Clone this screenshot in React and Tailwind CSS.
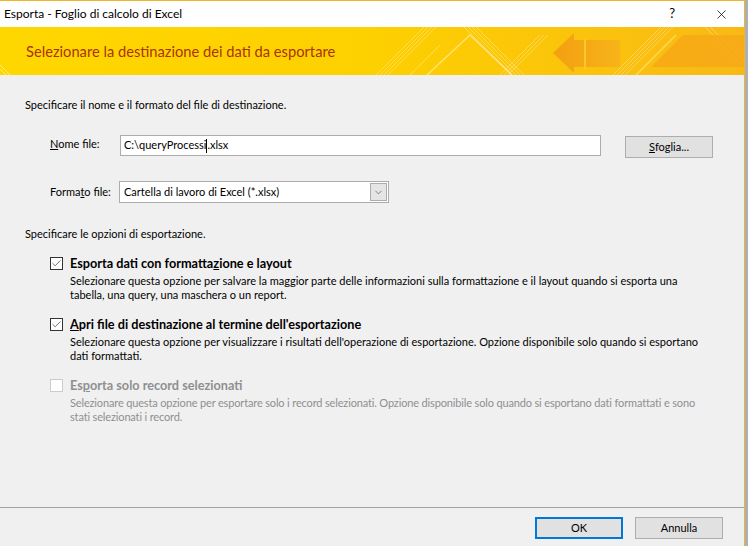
import { Check, ChevronDown, X } from 'lucide-react';

const font = { fontFamily: '"Segoe UI", Lato, "Noto Sans", sans-serif' };

// Decorative banner art: diagonal light stripes and an orange arrow
const BannerArt = () => (
  <svg className="absolute inset-0" width="744" height="48" viewBox="0 0 744 48">
    <defs>
      <linearGradient id="bg" x1="0" y1="0" x2="1" y2="0">
        <stop offset="0" stopColor="#ffd700" />
        <stop offset="0.5" stopColor="#fdd000" />
        <stop offset="1" stopColor="#f9b915" />
      </linearGradient>
      <linearGradient id="arrow" x1="0" y1="0" x2="1" y2="0">
        <stop offset="0" stopColor="#f29b12" />
        <stop offset="1" stopColor="#f7b21a" />
      </linearGradient>
    </defs>
    <rect width="744" height="48" fill="url(#bg)" />
    <g stroke="#ffffff" strokeOpacity="0.3" strokeWidth="1">
      <path d="M376 48 L424 0 M380 48 L428 0 M384 48 L432 0 M388 48 L436 0" />
      <path d="M464 0 L512 48 M468 0 L516 48 M472 0 L520 48 M476 0 L524 48" />
      <path d="M500 48 L540 8 M504 48 L544 8 M508 48 L548 8" />
      <path d="M613 48 L661 0 M617 48 L665 0 M621 48 L669 0 M625 48 L673 0" />
      <path d="M705 0 L744 39 M710 0 L744 34" />
    </g>
    <path d="M427 48 L470 8 L512 48" fill="none" stroke="#ffffff" strokeOpacity="0.45" strokeWidth="1.5" />
    <path d="M410 48 L440 18" stroke="#ffffff" strokeOpacity="0.35" strokeWidth="1" />
    <path d="M0 42 L6 48 M0 38 L10 48" stroke="#ffffff" strokeOpacity="0.5" strokeWidth="1" />
    <polygon points="553,26 574,6 574,13 620,13 620,40 574,40 574,46" fill="url(#arrow)" opacity="0.9" />
    <line x1="585" y1="12" x2="585" y2="42" stroke="#fcc72c" strokeWidth="2" />
    <polygon points="651,40 683,8 744,8 744,40" fill="#f6a716" opacity="0.8" />
    <path d="M636 48 L676 8" stroke="#ffe27a" strokeOpacity="0.7" strokeWidth="1.5" />
  </svg>
);

const CheckBox = ({ checked, disabled }) => (
  <div
    className={`flex h-[13px] w-[13px] shrink-0 items-center justify-center border ${
      disabled ? 'border-[#cccccc] bg-white' : 'border-[#333333] bg-white'
    }`}
  >
    {checked && <Check size={11} strokeWidth={1.5} className="text-[#333333]" />}
  </div>
);

const Option = ({ checked, disabled, label, children }) => (
  <div className="flex items-start gap-[7px]">
    <div className="pt-[1px]">
      <CheckBox checked={checked} disabled={disabled} />
    </div>
    <div className="flex flex-col">
      <div className={`h-[15px] text-[12.7px] leading-[15px] font-bold ${disabled ? 'text-[#8f8f8f]' : 'text-black'}`}>
        {label}
      </div>
      <div
        className={`mt-[3px] w-[632px] text-[11px] leading-[14px] ${
          disabled ? 'tracking-[-0.15px] text-[#8f8f8f]' : 'text-black'
        }`}
      >
        {children}
      </div>
    </div>
  </div>
);

export default function App() {
  return (
    <div className="flex h-[546px] w-[748px] overflow-hidden bg-[#aeb0b8]" style={font}>
      <div className="flex w-[745px] flex-col border-t border-r border-[#f0b429] bg-[#f0f0f0]">
        {/* title bar */}
        <div className="flex h-[26px] items-center bg-white text-[12px] text-black">
          <span className="pl-[4px]">Esporta - Foglio di calcolo di Excel</span>
          <span className="ml-auto mr-[39px] text-[13px]">?</span>
          <X size={15} strokeWidth={1.2} className="mr-[15px]" />
        </div>

        {/* header banner */}
        <div className="relative h-[48px]">
          <BannerArt />
          <div className="relative flex h-full items-center pl-[26px] text-[14.7px] text-[#a8340c]">
            Selezionare la destinazione dei dati da esportare
          </div>
        </div>

        {/* body */}
        <div className="flex flex-1 flex-col px-[25px] pt-[22px] text-[11px] text-black">
          <div className="leading-[16px]">Specificare il nome e il formato del file di destinazione.</div>

          <div className="mt-[22px] flex items-start pl-[25px]">
            <div className="w-[70px] pt-[1px] leading-[16px]">
              <span className="underline">N</span>ome file:
            </div>
            <div className="flex h-[21px] w-[481px] items-center border border-[#acacac] bg-white pl-[3px]">
              C:\queryProcessi
              <span className="inline-block h-[14px] w-px bg-black" />
              .xlsx
            </div>
            <div className="ml-[24px] mt-[1px] flex h-[22px] w-[88px] items-center justify-center border border-[#adadad] bg-[#e1e1e1]">
              <span className="underline">S</span>foglia...
            </div>
          </div>

          <div className="mt-[23px] flex items-center pl-[25px]">
            <div className="w-[69px] leading-[16px]">
              Forma<span className="underline">t</span>o file:
            </div>
            <div className="flex h-[22px] w-[270px] items-center border border-[#acacac] bg-white pl-[4px]">
              <span className="flex-1">Cartella di lavoro di Excel (*.xlsx)</span>
              <div className="mr-[1px] flex h-[18px] w-[17px] items-center justify-center border border-[#acacac] bg-[#e5e5e5]">
                <ChevronDown size={11} strokeWidth={1.5} className="text-[#555555]" />
              </div>
            </div>
          </div>

          <div className="mt-[23px] leading-[16px]">Specificare le opzioni di esportazione.</div>

          <div className="mt-[14px] flex flex-col gap-[15px] pl-[25px]">
            <Option checked label={<>Esporta dati con formatta<span className="underline">z</span>ione e layout</>}>
              Selezionare questa opzione per salvare la maggior parte delle informazioni sulla formattazione e il layout quando si esporta una tabella, una query, una maschera o un report.
            </Option>
            <Option checked label={<><span className="underline">A</span>pri file di destinazione al termine dell'esportazione</>}>
              Selezionare questa opzione per visualizzare i risultati dell'operazione di esportazione. Opzione disponibile solo quando si esportano dati formattati.
            </Option>
            <Option disabled label={<>Es<span className="underline">p</span>orta solo record selezionati</>}>
              Selezionare questa opzione per esportare solo i record selezionati. Opzione disponibile solo quando si esportano dati formattati e sono stati selezionati i record.
            </Option>
          </div>

          <div className="flex-1" />
        </div>

        {/* footer */}
        <div className="h-px bg-[#a0a0a0]" />
        <div className="flex h-[38px] items-start justify-end gap-[12px] pr-[21px] pt-[9px] text-[11px]">
          <div className="flex h-[22px] w-[88px] items-center justify-center border-2 border-[#0078d7] bg-[#e1e1e1]">OK</div>
          <div className="flex h-[22px] w-[88px] items-center justify-center border border-[#adadad] bg-[#e1e1e1]">Annulla</div>
        </div>
      </div>
      <div className="flex-1" />
    </div>
  );
}
